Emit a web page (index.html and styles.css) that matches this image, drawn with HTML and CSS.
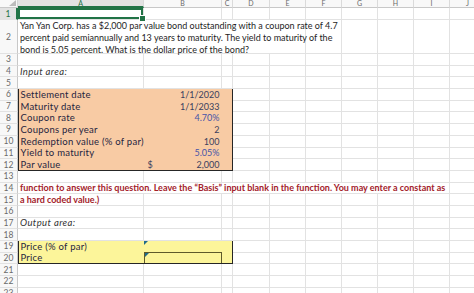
FILE: index.html
```html
<!DOCTYPE html>
<html lang="en">
<head>
  <meta charset="UTF-8" />
  <title>Bond price</title>
  <link rel="stylesheet" href="styles.css">
</head>
<body>

  <div class="sheet" id="sheet">
    <div class="corner"></div>
    <div class="colhead sel">A</div>
    <div class="colhead">B</div>
    <div class="colhead">C</div>
    <div class="colhead">D</div>
    <div class="colhead">E</div>
    <div class="colhead">F</div>
    <div class="colhead">G</div>
    <div class="colhead">H</div>
    <div class="colhead">I</div>
    <div class="colhead">J</div>

    <!-- Input area A6:C12 -->
    <div class="inputs">
      <span class="label">Settlement date</span><span class="val">1/1/2020</span><span></span>
      <span class="label">Maturity date</span><span class="val">1/1/2033</span><span></span>
      <span class="label">Coupon rate</span><span class="val pct">4.70%</span><span></span>
      <span class="label">Coupons per year</span><span class="val">2</span><span></span>
      <span class="label">Redemption value (% of par)</span><span class="val">100</span><span></span>
      <span class="label">Yield to maturity</span><span class="val pct">5.05%</span><span></span>
      <span class="label">Par value</span><span class="val money"><span>$</span><span>2,000</span></span><span></span>
    </div>

    <!-- Output area A19:C20 -->
    <div class="outputs">
      <span class="label">Price (% of par)</span><span class="val flag"></span><span></span>
      <span class="label">Price</span><span class="val flag answer"></span><span></span>
    </div>
  </div>

  <script>
    const sheet = document.getElementById('sheet');

    // cells with content, by row
    const content = {
      1: [{ cls: 'sel' }],
      2: [{ span: 5, cls: 'question', text: 'Yan Yan Corp. has a $2,000 par value bond outstanding with a coupon rate of 4.7\npercent paid semiannually and 13 years to maturity. The yield to maturity of the\nbond is 5.05 percent. What is the dollar price of the bond?' }],
      4: [{ cls: 'note', text: 'Input area:' }],
      14: [{ span: 9, cls: 'warn', text: 'function to answer this question. Leave the \u201cBasis\u201d input blank in the function. You may enter a constant as' }],
      15: [{ cls: 'warn', text: 'a hard coded value.)' }],
      17: [{ cls: 'note', text: 'Output area:' }]
    };

    function covered(r, c) {
      if (c > 2) return false;
      return (r >= 6 && r <= 12) || (r >= 19 && r <= 20);
    }

    for (let r = 1; r <= 23; r++) {
      const head = document.createElement('div');
      head.className = 'rowhead' + (r === 1 ? ' sel' : '');
      head.textContent = r;
      sheet.appendChild(head);

      let c = 0;
      (content[r] || []).forEach(item => {
        const cell = document.createElement('div');
        cell.className = 'cell ' + (item.cls || '');
        if (item.span) cell.style.gridColumn = 'span ' + item.span;
        if (item.text) cell.textContent = item.text;
        sheet.appendChild(cell);
        c += item.span || 1;
      });

      for (; c < 10; c++) {
        if (covered(r, c)) continue;
        const cell = document.createElement('div');
        cell.className = 'cell';
        sheet.appendChild(cell);
      }
    }
  </script>

</body>
</html>
```

FILE: styles.css
```css
* {
  box-sizing: border-box;
}

body {
  margin: 0;
  background: #fff;
  font-family: Lato, 'Open Sans', sans-serif;
  font-size: 9px;
  color: #222;
  overflow: hidden;
}

.sheet {
  display: grid;
  grid-template-columns: 18px 126px 78px 11px 37px 36px 36px 36px 36px 36px 36px;
  grid-template-rows: 8px 12px 34px repeat(21, 11.7px);
  width: 486px;
}

/* headers */

.corner {
  position: relative;
  background: #f8f8f8;
  border-right: 1px solid #d4d4d4;
  border-bottom: 1px solid #c8c8c8;
}

.corner::after {
  content: '';
  position: absolute;
  right: 1px;
  bottom: 1px;
  border-left: 7px solid transparent;
  border-bottom: 6px solid #bcbcbc;
}

.colhead {
  background: #f8f8f8;
  color: #6a6a6a;
  text-align: center;
  line-height: 7px;
  font-size: 7px;
  border-right: 1px solid #dadada;
  border-bottom: 1px solid #c8c8c8;
}

.colhead.sel {
  background: #e2e2e2;
  color: #217346;
  border-bottom: 2px solid #217346;
}

.rowhead {
  display: flex;
  align-items: center;
  justify-content: center;
  background: #f8f8f8;
  color: #6a6a6a;
  font-size: 8.5px;
  border-right: 1px solid #c8c8c8;
  border-bottom: 1px solid #e2e2e2;
}

.rowhead.sel {
  background: #e2e2e2;
  color: #217346;
  border-right: 2px solid #217346;
}

/* cells */

.cell {
  display: flex;
  align-items: center;
  min-width: 0;
  padding: 0 2px;
  white-space: nowrap;
  border-right: 1px solid #e2e2e2;
  border-bottom: 1px solid #e2e2e2;
}

.cell.sel {
  position: relative;
  box-shadow: inset 0 0 0 2px #217346;
}

.cell.sel::after {
  content: '';
  position: absolute;
  right: -3px;
  bottom: -3px;
  width: 5px;
  height: 5px;
  background: #217346;
  border: 1px solid #fff;
  z-index: 2;
}

.question {
  white-space: pre;
  line-height: 12px;
  padding-top: 3px;
  color: #1e1e1e;
}

.note {
  font-style: italic;
  font-size: 9.5px;
  letter-spacing: 0.4px;
  color: #333;
}

.warn {
  font-weight: bold;
  color: #a3212a;
}

/* boxed areas */

.inputs,
.outputs {
  display: grid;
  grid-template-columns: 124.5px 78px 1fr;
  border: 1.5px solid #262626;
  margin: -1px 0 0 0;
}

.inputs {
  grid-column: 2 / 5;
  grid-row: 7 / 14;
  grid-template-rows: repeat(7, 1fr);
  background: #f8cba4;
}

.outputs {
  grid-column: 2 / 5;
  grid-row: 20 / 22;
  grid-template-rows: repeat(2, 1fr);
  background: #fcf59a;
}

.label {
  display: flex;
  align-items: center;
  padding-left: 1.5px;
  white-space: nowrap;
  font-size: 9.5px;
  letter-spacing: 0.25px;
  color: #1f2440;
}

.val {
  display: flex;
  align-items: center;
  justify-content: flex-end;
  padding-right: 2px;
  color: #3a3f5e;
}

.val.pct {
  color: #4653a8;
}

.val.money {
  justify-content: space-between;
  padding-left: 4px;
}

.flag {
  position: relative;
}

.flag::before {
  content: '';
  position: absolute;
  top: 0;
  left: 0;
  border-top: 4px solid #1f6a8a;
  border-right: 4px solid transparent;
}

.answer {
  border: 1px solid #5e5a2a;
  border-bottom: none;
}
```
